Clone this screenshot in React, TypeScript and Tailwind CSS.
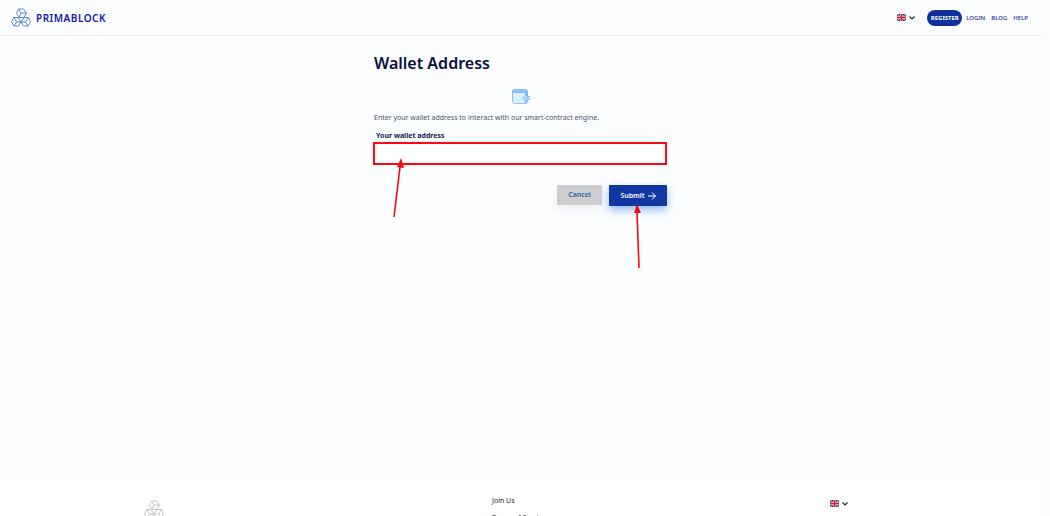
import React from "react";

function Logo({ className }: { className: string }) {
  return (
    <svg viewBox="0 0 40 38" className={className} fill="none" stroke="currentColor" strokeWidth="1.6" strokeLinejoin="round" aria-hidden="true">
      <path d="M15 2h10l6 8-5 9H16l-5-9zM15 2l5 8-4 9M20 10h11" />
      <path d="M5 19h9l6 9-5 8H6l-5-8zM20 28h-9l-5-9M11 28l-5 8" />
      <path d="M26 19h9l4 9-5 8h-9l-5-8zM20 28h9l6-9M29 28l5 8" />
    </svg>
  );
}

function Flag() {
  return (
    <svg viewBox="0 0 18 14" className="h-[7px] w-[9px]" preserveAspectRatio="none" aria-hidden="true">
      <path fill="#1c2470" d="M0 0h18v14H0z" />
      <path stroke="#e9e4ef" strokeWidth="2" d="m0 0 18 14M18 0 0 14" />
      <path stroke="#f7e9ee" strokeWidth="5" d="M9 0v14M0 7h18" />
      <path stroke="#df202f" strokeWidth="3.4" d="M9 0v14M0 7h18" />
    </svg>
  );
}

function LanguageButton() {
  return (
    <button type="button" aria-label="Change language" className="flex items-center gap-[3px]">
      <Flag />
      <svg viewBox="0 0 12 8" className="h-1 w-1.5" fill="none" stroke="#10243a" strokeWidth="2.2" aria-hidden="true">
        <path d="m1 1 5 5 5-5" />
      </svg>
    </button>
  );
}

function WalletIcon() {
  return (
    <svg viewBox="0 0 36 30" className="mx-auto h-[15px] w-[18px]" fill="#daf0ff" stroke="#75b5ec" strokeWidth="1.6" strokeLinejoin="round" aria-hidden="true">
      <path fill="#8fc4f3" d="M1 5q0-4 4-4h22q4 0 4 4v8H1z" />
      <path d="M1 4q0 3 4 3h19q4 0 4 3v15q0 4-4 4H5q-4 0-4-4z" />
      <path fill="#8fc4f3" d="M28 10V7l3 2v16q0 4-5 4 2-1 2-4z" />
      <path d="M32 14h-6q-4 0-4 4t4 4h6z" />
      <path d="M31 15h4v6h-4z" />
      <circle cx="27" cy="18" r="1.5" />
    </svg>
  );
}

export default function App() {
  return (
    <div className="h-screen overflow-hidden bg-[#fbfdff] pr-2 font-['Noto_Sans','Open_Sans',sans-serif]">
      <header className="flex h-9 items-center justify-between border-b border-[#e9ecf0] pr-[14px] pl-[11px]">
        <a href="#home" className="flex items-center gap-[5px] text-[10px] leading-4 font-semibold text-[#1616a5]">
          <Logo className="h-[19px] w-5 text-[#3b6fc9]" />
          <span className="tracking-wider">PRIMABLOCK</span>
        </a>
        <nav className="flex items-center gap-3">
          <LanguageButton />
          <div className="flex items-center gap-1.5 text-[6px] leading-4 font-medium text-[#1c2796]">
            <a href="#register" className="-mr-0.5 flex h-4 w-[35px] items-center justify-center rounded-full bg-[#10309f] font-bold text-white">REGISTER</a>
            <a href="#login">LOGIN</a>
            <a href="#blog">BLOG</a>
            <a href="#help">HELP</a>
          </div>
        </nav>
      </header>

      <main className="min-h-[438px] pt-[17px] pr-0.5">
        <form className="relative mx-auto w-[294px]" onSubmit={(event) => event.preventDefault()}>
          <h1 className="pl-px text-base leading-5 font-semibold text-[#080f3b]">Wallet Address</h1>
          <div className="pt-4 pl-0.5"><WalletIcon /></div>
          <p className="pt-2 pl-px text-[7px] leading-3 text-[#495566]">Enter your wallet address to interact with our smart-contract engine.</p>
          <label htmlFor="wallet" className="block pt-1.5 pl-[3px] text-[7px] leading-3 font-bold text-[#10234b]">Your wallet address</label>
          <input id="wallet" type="text" className="block h-[23px] w-full border-2 border-[#fb0712] bg-white px-2 text-[8px] outline-none" />
          <div className="flex items-start justify-end gap-[7px] pt-5 text-[7px] leading-3 font-semibold">
            <button type="button" className="h-5 w-[45px] rounded-[1px] bg-[#cecece] text-[#2861b6] shadow-[0_4px_8px_#ededf1]">Cancel</button>
            <button type="submit" className="flex h-[21px] w-[58px] items-center justify-center gap-[3px] rounded-[1px] bg-[#1237a2] text-white shadow-[0_4px_9px_#91b9f1]">
              Submit
              <svg viewBox="0 0 16 16" className="h-2 w-2" fill="none" stroke="currentColor" strokeWidth="2" aria-hidden="true">
                <path d="M0 8h15M8 1l7 7-7 7" />
              </svg>
            </button>
          </div>
          <svg viewBox="0 0 294 120" className="pointer-events-none absolute top-[105px] left-0 h-[120px] w-[294px]" fill="#fb0712" stroke="#fb0712" aria-hidden="true">
            <path strokeWidth="1.6" d="M21 59 27 9M266 110l-2-56" />
            <path stroke="none" d="m28 0 3 10-7-1zM264 46l4 9h-7z" />
          </svg>
        </form>
      </main>

      <footer className="grid grid-cols-[348fr_338fr_212fr] items-start bg-white pt-5 pl-36">
        <Logo className="mt-1.5 h-[19px] w-5 text-[#b9b9b9]" />
        <nav className="flex flex-col gap-1 text-[7px] leading-[13px] text-[#222]">
          <a href="#join">Join Us</a>
          <a href="#terms">Terms of Service</a>
        </nav>
        <div className="pt-1.5"><LanguageButton /></div>
      </footer>
    </div>
  );
}
